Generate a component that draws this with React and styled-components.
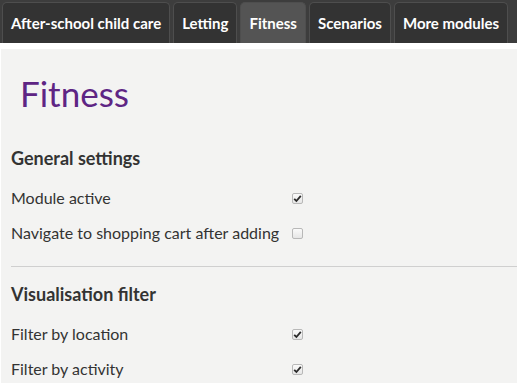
import styled, { createGlobalStyle } from "styled-components";

const Global = createGlobalStyle`
  body {
    margin: 0;
    background: #ffffff;
    font-family: Lato, "Open Sans", sans-serif;
  }
`;

const TabBar = styled.div`
  display: flex;
  gap: 3px;
  padding: 2px 2px 0 2px;
  height: 41px;
  background: #3d3d3d;
  box-sizing: content-box;
`;

const Tab = styled.div`
  display: flex;
  align-items: center;
  padding: 0 8px;
  border: 1px solid #4e4e4e;
  border-bottom: none;
  border-radius: 5px 5px 0 0;
  background: ${(p) => (p.active ? "#545454" : "#333333")};
  color: #ffffff;
  font-weight: 700;
  font-size: 15px;
  white-space: nowrap;
`;

const Panel = styled.div`
  margin: 6px 0 0 1px;
  background: #f3f3f2;
  padding: 20px 0 0 10px;
  height: 334px;
  box-sizing: border-box;
`;

const Heading = styled.h1`
  margin: 0 0 0 9px;
  font-weight: 400;
  font-size: 35px;
  color: #5e2584;
  line-height: 48px;
`;

const Section = styled.h3`
  margin: ${(p) => p.top}px 0 0 0;
  font-size: 18px;
  font-weight: 700;
  color: #333333;
  line-height: 22px;
`;

const Grid = styled.div`
  display: grid;
  grid-template-columns: 271px max-content;
  column-gap: 10px;
  row-gap: 13px;
  margin-top: ${(p) => p.top}px;
  color: #333333;
  font-size: 16px;
  line-height: 22px;
`;

const Label = styled.div`
  white-space: nowrap;
`;

const Box = styled.span`
  width: 11px;
  height: 11px;
  align-self: center;
  border: 1px solid #b8b8b8;
  border-radius: 2px;
  background: linear-gradient(#fafafa, #e6e6e6);
  display: flex;
  align-items: center;
  justify-content: center;
  box-sizing: border-box;
  margin-top: 1px;
`;

const Rule = styled.hr`
  border: none;
  border-top: 1px solid #cfcfcf;
  margin: 22px 0 0 0;
`;

const Check = ({ on }) => (
  <Box>
    {on && (
      <svg width="9" height="9" viewBox="0 0 9 9">
        <path d="M1.2 4.8 L3.4 7 L7.8 1.8" fill="none" stroke="#2a2a2a" strokeWidth="1.8" />
      </svg>
    )}
  </Box>
);

const Row = ({ label, on }) => (
  <>
    <Label>{label}</Label>
    <Check on={on} />
  </>
);

const tabs = ["After-school child care", "Letting", "Fitness", "Scenarios", "More modules"];

export default function App() {
  return (
    <>
      <Global />
      <TabBar>
        {tabs.map((t) => (
          <Tab key={t} active={t === "Fitness"}>
            {t}
          </Tab>
        ))}
      </TabBar>
      <Panel>
        <Heading>Fitness</Heading>
        <Section top={30}>General settings</Section>
        <Grid top={18}>
          <Row label="Module active" on />
          <Row label="Navigate to shopping cart after adding" />
        </Grid>
        <Rule />
        <Section top={16}>Visualisation filter</Section>
        <Grid top={18}>
          <Row label="Filter by location" on />
          <Row label="Filter by activity" on />
        </Grid>
      </Panel>
    </>
  );
}
